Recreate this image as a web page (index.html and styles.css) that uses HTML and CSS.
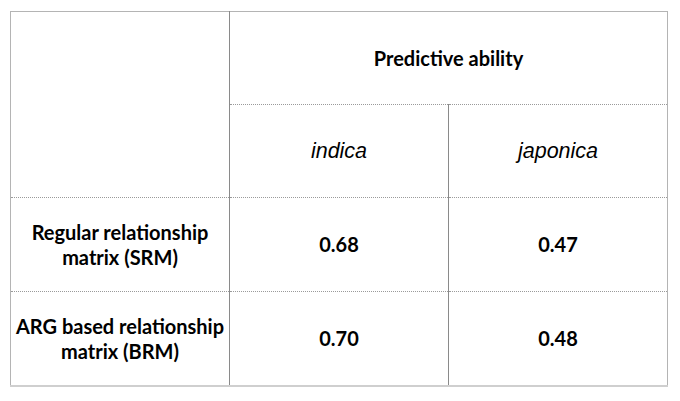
FILE: index.html
```html
<!DOCTYPE html>
<html lang="en">
<head>
<meta charset="utf-8">
<title>Predictive ability</title>
<link rel="stylesheet" href="styles.css">
</head>
<body>
<div class="page">
  <table class="grid">
    <tr class="row-head">
      <td class="cell corner" rowspan="2"></td>
      <th class="cell title" colspan="2">Predictive ability</th>
    </tr>
    <tr class="row-sub">
      <td class="cell species">indica</td>
      <td class="cell species">japonica</td>
    </tr>
    <tr class="row-data">
      <th class="cell label">Regular relationship<br>matrix (SRM)</th>
      <td class="cell value">0.68</td>
      <td class="cell value">0.47</td>
    </tr>
    <tr class="row-data last">
      <th class="cell label">ARG based relationship<br>matrix (BRM)</th>
      <td class="cell value">0.70</td>
      <td class="cell value">0.48</td>
    </tr>
  </table>
</div>
</body>
</html>
```

FILE: styles.css
```css
html, body {
  margin: 0;
  padding: 0;
  background: #ffffff;
}
.page {
  padding: 11px 12px 0 10px;
}
.grid {
  width: 658px;
  border-collapse: collapse;
  table-layout: fixed;
  border-top: 1px solid #b4b4b4;
  border-left: 1px solid #b4b4b4;
  border-right: 1px solid #b4b4b4;
  border-bottom: 2px solid #cfcfcf;
  color: #000;
}
.cell {
  padding: 0;
  text-align: center;
  vertical-align: middle;
  border-left: 1px solid #8a8a8a;
  border-top: 1px dotted #9a9a9a;
}
.row-head .cell { height: 92px; border-top: none; }
.row-sub .cell { height: 92px; }
.row-data .cell { height: 93px; }
.corner { border-left: none; }
.label { border-left: none; }
.title, .label, .value {
  font-family: Lato, "Open Sans", sans-serif;
  font-weight: 700;
  font-size: 20px;
  line-height: 25px;
  color: #000;
}
.species {
  font-family: "Liberation Sans", Arial, sans-serif;
  font-style: italic;
  font-weight: 400;
  font-size: 21.5px;
}
```
